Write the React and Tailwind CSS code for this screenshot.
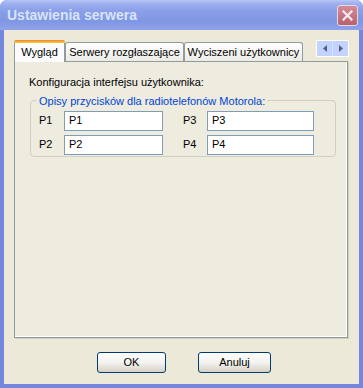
const font = { fontFamily: '"Liberation Sans", Arial, sans-serif' };

function Tab({ label, active, width }) {
  if (active) {
    return (
      <div className={`relative z-10 -mb-px h-[22px] ${width} rounded-t-[3px] border border-b-0 border-[#919B9C] bg-[#FCFCFE] flex items-center justify-center`}>
        <div className="absolute -left-px -right-px -top-px h-[3px] rounded-t-[3px] bg-gradient-to-b from-[#E68B2C] to-[#FFC73C]"></div>
        <span className="pt-[1px]">{label}</span>
      </div>
    );
  }
  return (
    <div className={`h-[19px] ${width} rounded-t-[3px] border border-b-0 border-[#919B9C] bg-gradient-to-b from-white to-[#ECEBE6] flex items-center justify-center`}>
      <span>{label}</span>
    </div>
  );
}

function Field({ label, value, labelW, inputW }) {
  return (
    <div className="flex items-center">
      <span className={labelW}>{label}</span>
      <div className={`${inputW} h-[20px] border border-[#7F9DB9] bg-white flex items-center pl-[4px]`}>{value}</div>
    </div>
  );
}

function Button({ children, width }) {
  return (
    <div className={`${width} h-[21px] rounded-[3px] border border-[#003C74] bg-gradient-to-b from-white via-[#F3F3EF] to-[#D6D0C5] flex items-center justify-center`}>
      {children}
    </div>
  );
}

export default function App() {
  return (
    <div className="w-[363px] h-[388px] bg-white text-[11px] text-black" style={font}>
      <div className="w-full h-full flex flex-col rounded-t-[7px] overflow-hidden bg-[#7586DD]">
        {/* title bar */}
        <div className="h-[30px] shrink-0 flex items-center justify-between pl-[7px] pr-[5px] bg-[linear-gradient(to_bottom,#B7C6F6_0%,#9DB0EF_12%,#8AA0E8_35%,#7F96E3_70%,#8FA3EA_100%)]">
          <span className="text-[14px] font-bold text-[#D8E4F8] pt-[1px]">Ustawienia serwera</span>
          <div className="w-[21px] h-[21px] mt-[1px] rounded-[3px] border border-[#E8D8E0] bg-gradient-to-b from-[#D38C98] to-[#B8606E] flex items-center justify-center">
            <svg width="11" height="11" viewBox="0 0 11 11">
              <path d="M1.5 1.5 L9.5 9.5 M9.5 1.5 L1.5 9.5" stroke="#F4ECF0" strokeWidth="2.2" strokeLinecap="square" />
            </svg>
          </div>
        </div>

        {/* client area */}
        <div className="flex-1 mx-[4px] mb-[4px] bg-[#ECE9D8] flex flex-col pt-[10px] pl-[10px] pr-[11px]">
          <div className="flex items-end justify-between">
            <div className="flex items-end">
              <Tab label="Wygląd" active width="w-[51px]" />
              <Tab label="Serwery rozgłaszające" width="w-[119px]" />
              <Tab label="Wyciszeni użytkownicy" width="w-[119px]" />
            </div>
            <div className="w-[33px] h-[17px] mb-[4px] mr-[-1px] border border-white bg-[#C3D3FD] flex">
              <div className="flex-1 flex items-center justify-center border-r border-[#D8E2FE]">
                <svg width="4" height="7" viewBox="0 0 4 7"><path d="M4 0 L0 3.5 L4 7 Z" fill="#4D6185" /></svg>
              </div>
              <div className="flex-1 flex items-center justify-center">
                <svg width="4" height="7" viewBox="0 0 4 7"><path d="M0 0 L4 3.5 L0 7 Z" fill="#4D6185" /></svg>
              </div>
            </div>
          </div>

          {/* tab panel */}
          <div className="h-[277px] border border-[#919B9C] bg-[#EEEBDF] shadow-[1px_1px_0_#D0CEBF,inset_-1px_-1px_0_#FFFFFF] pt-[12px] pl-[14px]">
            <div>Konfiguracja interfejsu użytkownika:</div>
            <div className="relative mt-[9px] ml-px w-[306px] h-[57px] border border-[#D0D0BF] rounded-[4px] pt-[10px] pl-[8px]">
              <span className="absolute left-[6px] -top-[8px] px-[2px] bg-[#EEEBDF] text-[#0046D5]">Opisy przycisków dla radiotelefonów Motorola:</span>
              <div className="flex flex-col gap-[4px]">
                <div className="flex gap-[20px]">
                  <Field label="P1" value="P1" labelW="w-[25px]" inputW="w-[99px]" />
                  <Field label="P3" value="P3" labelW="w-[24px]" inputW="w-[107px]" />
                </div>
                <div className="flex gap-[20px]">
                  <Field label="P2" value="P2" labelW="w-[25px]" inputW="w-[99px]" />
                  <Field label="P4" value="P4" labelW="w-[24px]" inputW="w-[107px]" />
                </div>
              </div>
            </div>
          </div>

          {/* buttons */}
          <div className="flex mt-[14px] pl-[83px] gap-[32px]">
            <Button width="w-[69px]">OK</Button>
            <Button width="w-[73px]">Anuluj</Button>
          </div>
        </div>
      </div>
    </div>
  );
}
